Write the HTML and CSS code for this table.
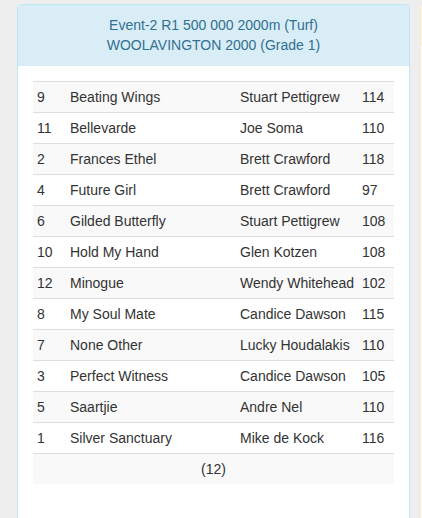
FILE: index.html
```html
<!DOCTYPE html>
<html>
<head>
<meta charset="utf-8">
<link rel="stylesheet" href="styles.css">
</head>
<body>
<div class="board">
  <div class="panel panel-info">
    <div class="panel-heading">
      <div>Event-2 R1 500 000 2000m (Turf)</div>
      <div>WOOLAVINGTON 2000 (Grade 1)</div>
    </div>
    <div class="panel-body">
      <table class="runners">
        <colgroup>
          <col class="c-no"><col class="c-horse"><col class="c-jockey"><col class="c-rating">
        </colgroup>
        <tbody>
          <tr><td>9</td><td>Beating Wings</td><td>Stuart Pettigrew</td><td>114</td></tr>
          <tr><td>11</td><td>Bellevarde</td><td>Joe Soma</td><td>110</td></tr>
          <tr><td>2</td><td>Frances Ethel</td><td>Brett Crawford</td><td>118</td></tr>
          <tr><td>4</td><td>Future Girl</td><td>Brett Crawford</td><td>97</td></tr>
          <tr><td>6</td><td>Gilded Butterfly</td><td>Stuart Pettigrew</td><td>108</td></tr>
          <tr><td>10</td><td>Hold My Hand</td><td>Glen Kotzen</td><td>108</td></tr>
          <tr><td>12</td><td>Minogue</td><td>Wendy Whitehead</td><td>102</td></tr>
          <tr><td>8</td><td>My Soul Mate</td><td>Candice Dawson</td><td>115</td></tr>
          <tr><td>7</td><td>None Other</td><td>Lucky Houdalakis</td><td>110</td></tr>
          <tr><td>3</td><td>Perfect Witness</td><td>Candice Dawson</td><td>105</td></tr>
          <tr><td>5</td><td>Saartjie</td><td>Andre Nel</td><td>110</td></tr>
          <tr><td>1</td><td>Silver Sanctuary</td><td>Mike de Kock</td><td>116</td></tr>
          <tr class="total"><td colspan="4">(12)</td></tr>
        </tbody>
      </table>
    </div>
  </div>
  <div class="panel panel-warning">
    <div class="panel-heading">&nbsp;</div>
  </div>
</div>
</body>
</html>
```

FILE: styles.css
```css
html, body {
  margin: 0;
  padding: 0;
  background: #eeeeee;
  font-family: "Liberation Sans", Arial, Helvetica, sans-serif;
  font-size: 14px;
  line-height: 20px;
  color: #333333;
}

.board {
  display: flex;
  gap: 10px;
  padding: 4px 0 0 17px;
  overflow: hidden;
  height: 518px;
  box-sizing: border-box;
}

.panel {
  flex: 0 0 auto;
  background: #ffffff;
  border: 1px solid transparent;
  border-radius: 4px;
  min-height: 600px;
}

.panel-info {
  width: 393px;
  box-sizing: border-box;
  border-color: #bce8f1;
}

.panel-warning {
  width: 393px;
  box-sizing: border-box;
  border-color: #faebcc;
}

.panel-heading {
  padding: 10px 15px 11px;
  text-align: center;
  border-top-left-radius: 3px;
  border-top-right-radius: 3px;
}

.panel-info .panel-heading {
  background: #d9edf7;
  color: #31708f;
}

.panel-warning .panel-heading {
  background: #fcf8e3;
  color: #8a6d3b;
}

.panel-body {
  padding: 15px;
}

.runners {
  width: 361px;
  border-collapse: collapse;
  border-spacing: 0;
  table-layout: fixed;
}

.c-no { width: 33px; }
.c-horse { width: 170px; }
.c-jockey { width: 122px; }
.c-rating { width: 36px; }

.runners td {
  padding: 5px 4px;
  border-top: 1px solid #dddddd;
  white-space: nowrap;
  text-align: left;
}

.runners tr:nth-child(odd) td {
  background: #f9f9f9;
}

.runners .total td {
  text-align: center;
}
```
